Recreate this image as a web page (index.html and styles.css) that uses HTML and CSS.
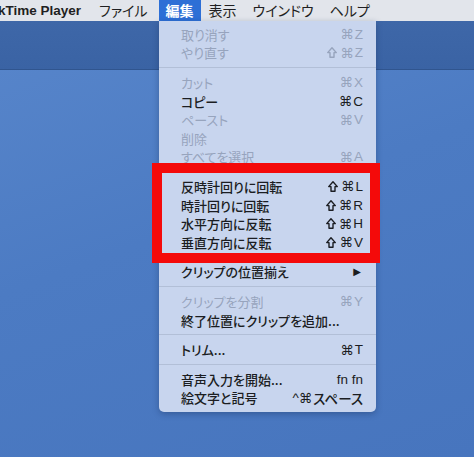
FILE: index.html
```html
<!DOCTYPE html>
<html lang="ja">
<head>
  <meta charset="UTF-8">
  <meta name="viewport" content="width=device-width, initial-scale=1.0">
  <title>QuickTime Player - 編集メニュー</title>
  <link rel="stylesheet" href="styles.css">
</head>
<body>

  <!-- Menu bar -->
  <div class="menubar">
    <span class="app-name">kTime Player</span>
    <span class="mb-item">ファイル</span>
    <span class="mb-item active">編集</span>
    <span class="mb-item">表示</span>
    <span class="mb-item">ウインドウ</span>
    <span class="mb-item">ヘルプ</span>
  </div>

  <!-- Desktop behind the menu -->
  <div class="desktop">
    <div class="window-bar"></div>
  </div>

  <!-- Edit menu -->
  <div class="menu">
    <div class="row off"><span>取り消す</span><span class="key"><i>⌘</i>Z</span></div>
    <div class="row off"><span>やり直す</span><span class="key"><svg class="shift" viewBox="0 0 10 11"><path d="M5 0.8 L9.3 5.6 H7 V10.2 H3 V5.6 H0.7 Z"/></svg><i>⌘</i>Z</span></div>
    <div class="sep"></div>
    <div class="row off"><span>カット</span><span class="key"><i>⌘</i>X</span></div>
    <div class="row"><span>コピー</span><span class="key"><i>⌘</i>C</span></div>
    <div class="row off"><span>ペースト</span><span class="key"><i>⌘</i>V</span></div>
    <div class="row off"><span>削除</span></div>
    <div class="row off"><span>すべてを選択</span><span class="key"><i>⌘</i>A</span></div>
    <div class="sep"></div>
    <div class="row"><span>反時計回りに回転</span><span class="key"><svg class="shift" viewBox="0 0 10 11"><path d="M5 0.8 L9.3 5.6 H7 V10.2 H3 V5.6 H0.7 Z"/></svg><i>⌘</i>L</span></div>
    <div class="row"><span>時計回りに回転</span><span class="key"><svg class="shift" viewBox="0 0 10 11"><path d="M5 0.8 L9.3 5.6 H7 V10.2 H3 V5.6 H0.7 Z"/></svg><i>⌘</i>R</span></div>
    <div class="row"><span>水平方向に反転</span><span class="key"><svg class="shift" viewBox="0 0 10 11"><path d="M5 0.8 L9.3 5.6 H7 V10.2 H3 V5.6 H0.7 Z"/></svg><i>⌘</i>H</span></div>
    <div class="row"><span>垂直方向に反転</span><span class="key"><svg class="shift" viewBox="0 0 10 11"><path d="M5 0.8 L9.3 5.6 H7 V10.2 H3 V5.6 H0.7 Z"/></svg><i>⌘</i>V</span></div>
    <div class="sep"></div>
    <div class="row"><span>クリップの位置揃え</span><span class="arrow">▶</span></div>
    <div class="sep"></div>
    <div class="row off"><span>クリップを分割</span><span class="key"><i>⌘</i>Y</span></div>
    <div class="row"><span>終了位置にクリップを追加...</span></div>
    <div class="sep"></div>
    <div class="row"><span>トリム...</span><span class="key"><i>⌘</i>T</span></div>
    <div class="sep"></div>
    <div class="row"><span>音声入力を開始...</span><span class="key">fn fn</span></div>
    <div class="row"><span>絵文字と記号</span><span class="key">^<i>⌘</i>スペース</span></div>
  </div>

  <!-- Red annotation box -->
  <div class="highlight"></div>

</body>
</html>
```

FILE: styles.css
```css
body { margin: 0; padding: 0; width: 474px; height: 457px; overflow: hidden; position: relative; background-color: #4d7cc3; font-family: "Noto Sans CJK JP", sans-serif; }

/* Menu bar */
.menubar { display: flex; align-items: center; height: 21px; background-color: #e2e5eb; color: #1f1f22; font-size: 14px; font-feature-settings: "palt"; white-space: nowrap; }
.app-name { font-family: "Liberation Sans", sans-serif; font-weight: bold; font-size: 13.5px; margin-left: -2px; margin-right: 10px; }
.mb-item { height: 21px; line-height: 21px; padding: 0 8px; }
.mb-item.active { background-color: #2d6fd6; color: #fff; font-weight: bold; padding: 0 7px; margin-left: 3px; }

/* Desktop */
.desktop { height: 436px; background: linear-gradient(160deg, #5886cb 0%, #4c7bc3 45%, #4775be 100%); }
.window-bar { height: 48px; background: linear-gradient(180deg, #3e67a8 0%, #3a63a4 100%); border-bottom: 1px solid #30558f; }

/* Dropdown menu */
.menu { position: absolute; left: 159px; top: 21px; width: 217px; box-sizing: border-box; padding: 4px 0 5px; background-color: #c8d5ee; border-radius: 0 0 5px 5px; box-shadow: 0 2px 6px rgba(20, 40, 80, 0.35); font-feature-settings: "palt"; }
.row { display: flex; justify-content: space-between; align-items: center; height: 18.6px; padding: 0 13px 0 22px; font-size: 13px; font-weight: 500; color: #1b1d22; white-space: nowrap; }
.row.off { color: #97a4bd; font-weight: 400; }
.key { display: flex; align-items: center; font-family: "Liberation Sans", "Noto Sans CJK JP", sans-serif; font-size: 13.5px; }
.key i { font-style: normal; font-family: "DejaVu Sans", sans-serif; font-size: 13.5px; margin-right: 1px; }
.shift { width: 10px; height: 11px; margin-right: 3px; fill: none; stroke: currentColor; stroke-width: 1.4; stroke-linejoin: round; }
.arrow { font-family: "DejaVu Sans", sans-serif; font-size: 10px; margin-right: 2px; }
.sep { height: 1px; margin: 5px 0; background-color: #b2bfd7; }

/* Annotation */
.highlight { position: absolute; left: 152px; top: 163px; width: 228px; height: 100px; box-sizing: border-box; border: 10px solid #f40a0a; }
```
